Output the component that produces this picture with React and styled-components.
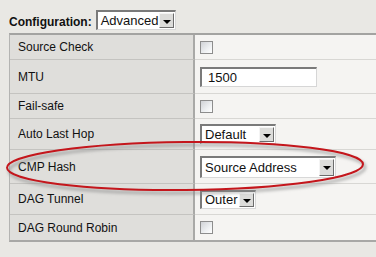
import styled, { createGlobalStyle } from "styled-components";

const GlobalStyle = createGlobalStyle`
  html, body {
    margin: 0;
    padding: 0;
    background: #e9e8e4;
    overflow: hidden;
  }
  body {
    font-family: "Liberation Sans", Arial, sans-serif;
    color: #111;
  }
`;

const Page = styled.div`
  position: relative;
  width: 376px;
  height: 257px;
  padding: 10px 0 0 9px;
  box-sizing: border-box;
`;

const ConfigBar = styled.div`
  display: flex;
  align-items: center;
  gap: 4px;
  height: 20px;
  margin-bottom: 3px;
`;

const ConfigLabel = styled.span`
  font-weight: bold;
  font-size: 12px;
  padding-top: 4px;
`;

const Table = styled.div`
  display: grid;
  grid-template-columns: 185px 1fr;
  border-top: 2px solid #a3a3a1;
  border-left: 1px solid #b4b4b2;
  border-bottom: 2px solid #a8a8a6;
`;

const LabelCell = styled.div`
  display: flex;
  align-items: center;
  height: ${(p) => p.$h - 1}px;
  padding-left: 8px;
  background: #dfdedb;
  font-size: 12px;
  border-bottom: ${(p) => (p.$last ? "none" : "1px solid #c4c3c0")};
  border-right: 2px solid #a9a9a7;
`;

const ValueCell = styled.div`
  display: flex;
  align-items: center;
  height: ${(p) => p.$h - 1}px;
  padding-left: 5px;
  background: #f5f4f2;
  border-bottom: ${(p) => (p.$last ? "none" : "1px solid #d8d7d4")};
`;

const Checkbox = styled.div`
  width: 11px;
  height: 11px;
  border: 1px solid #8d8d8d;
  background: linear-gradient(135deg, #d0d2d6 0%, #eef0f2 60%, #ffffff 100%);
`;

const TextInput = styled.div`
  width: 108px;
  height: 17px;
  border-top: 2px solid #7a7a7a;
  border-left: 2px solid #7a7a7a;
  border-right: 1px solid #d6d6d6;
  border-bottom: 1px solid #d6d6d6;
  background: #fff;
  font-size: 13px;
  line-height: 17px;
  padding-left: 6px;
  box-sizing: content-box;
`;

const SelectBox = styled.div`
  display: flex;
  align-items: stretch;
  width: ${(p) => p.$w - 3}px;
  height: ${(p) => p.$h - 3}px;
  border-top: 2px solid #7a7a7a;
  border-left: 2px solid #7a7a7a;
  border-right: 1px solid #d8d8d8;
  border-bottom: 1px solid #d8d8d8;
  background: #fff;
`;

const SelectText = styled.span`
  flex: 1;
  font-size: 13px;
  padding-left: 3px;
  display: flex;
  align-items: center;
  white-space: nowrap;
`;

const SelectButton = styled.span`
  width: 13px;
  margin: 1px;
  display: flex;
  align-items: center;
  justify-content: center;
  background: #dcdcda;
  border-top: 1px solid #f4f4f4;
  border-left: 1px solid #f4f4f4;
  border-right: 1px solid #6c6c6c;
  border-bottom: 1px solid #6c6c6c;
  &::after {
    content: "";
    width: 0;
    height: 0;
    margin-top: 2px;
    border-left: 4px solid transparent;
    border-right: 4px solid transparent;
    border-top: 4px solid #000;
  }
`;

const Highlight = styled.svg`
  position: absolute;
  left: 0;
  top: 0;
  pointer-events: none;
`;

function Select({ value, w, h }) {
  return (
    <SelectBox $w={w} $h={h}>
      <SelectText>{value}</SelectText>
      <SelectButton />
    </SelectBox>
  );
}

const rows = [
  { label: "Source Check", h: 25, kind: "check" },
  { label: "MTU", h: 34, kind: "input", value: "1500" },
  { label: "Fail-safe", h: 25, kind: "check" },
  { label: "Auto Last Hop", h: 31, kind: "select", value: "Default", w: 76, sh: 20 },
  { label: "CMP Hash", h: 34, kind: "select", value: "Source Address", w: 136, sh: 22 },
  { label: "DAG Tunnel", h: 31, kind: "select", value: "Outer", w: 56, sh: 19 },
  { label: "DAG Round Robin", h: 26, kind: "check" },
];

export default function App() {
  return (
    <>
      <GlobalStyle />
      <Page>
        <ConfigBar>
          <ConfigLabel>Configuration:</ConfigLabel>
          <Select value="Advanced" w={80} h={20} />
        </ConfigBar>
        <Table>
          {rows.map((r, i) => {
            const last = i === rows.length - 1;
            return [
              <LabelCell key={r.label + "-l"} $h={r.h} $last={last}>
                {r.label}
              </LabelCell>,
              <ValueCell key={r.label + "-v"} $h={r.h} $last={last}>
                {r.kind === "check" && <Checkbox />}
                {r.kind === "input" && <TextInput>{r.value}</TextInput>}
                {r.kind === "select" && <Select value={r.value} w={r.w} h={r.sh} />}
              </ValueCell>,
            ];
          })}
        </Table>
        <Highlight width="376" height="257" viewBox="0 0 376 257">
          <defs>
            <filter id="blur" x="-10%" y="-50%" width="120%" height="200%">
              <feGaussianBlur stdDeviation="1.6" />
            </filter>
          </defs>
          <ellipse
            cx="187"
            cy="169"
            rx="178"
            ry="24"
            transform="rotate(-0.6 187 169)"
            fill="none"
            stroke="#8a8a8a"
            strokeOpacity="0.6"
            strokeWidth="3"
            filter="url(#blur)"
          />
          <ellipse
            cx="185"
            cy="166"
            rx="178"
            ry="24"
            transform="rotate(-0.6 185 166)"
            fill="none"
            stroke="#c4161c"
            strokeWidth="2"
          />
        </Highlight>
      </Page>
    </>
  );
}
